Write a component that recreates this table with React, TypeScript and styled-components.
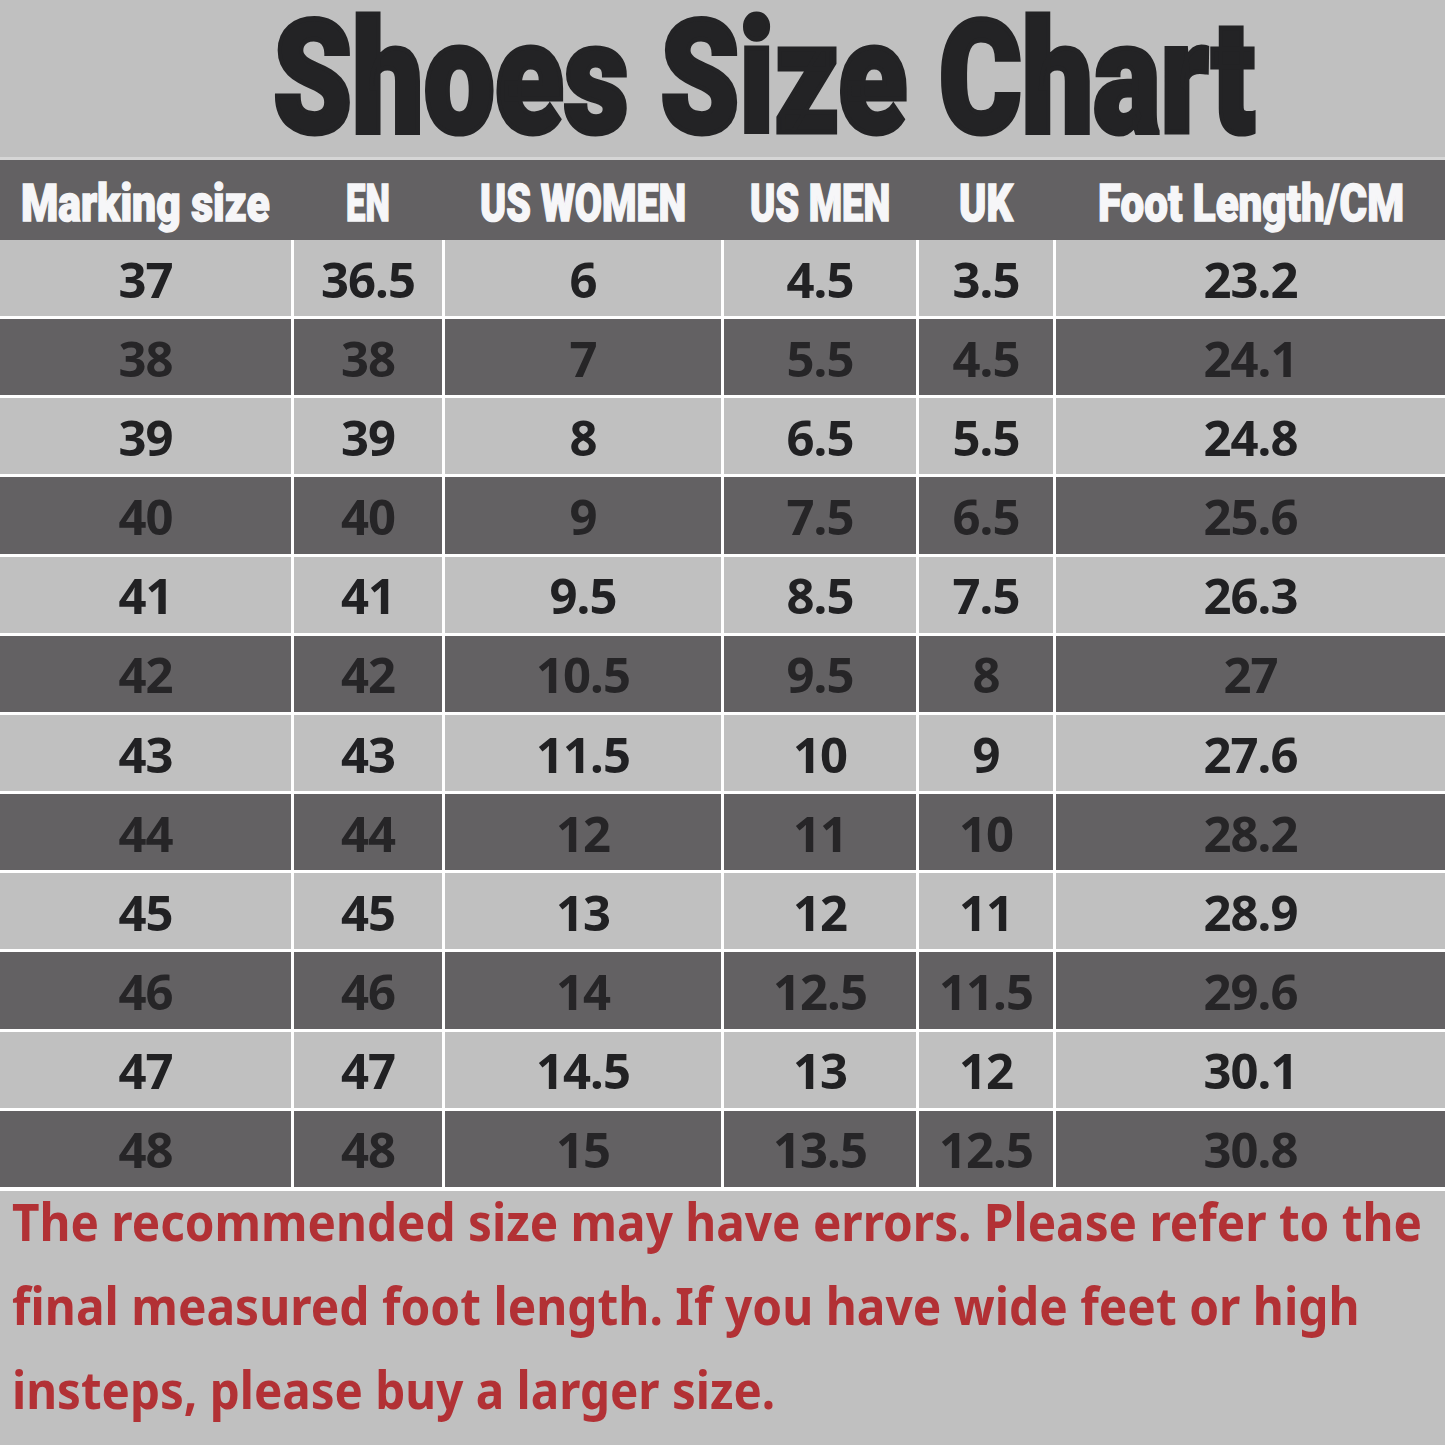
import React, { useLayoutEffect, useRef, useState } from "react";
import styled, { createGlobalStyle } from "styled-components";

const Global = createGlobalStyle`
  html, body { margin: 0; padding: 0; background: #c0c0c0; }
  #root { width: 1445px; }
`;

const Page = styled.div`
  width: 1445px;
  height: 1445px;
  background: #c0c0c0;
  display: flex;
  flex-direction: column;
  overflow: hidden;
`;

const TitleBar = styled.div`
  height: 157px;
  padding-left: 273px;
  border-bottom: 3px solid #d6d6d6;
  display: flex;
  align-items: flex-start;
`;

const TitleText = styled.h1`
  margin: 0;
  font-family: Roboto, Lato, "Liberation Sans", sans-serif;
  font-weight: 900;
  font-size: 158px;
  line-height: 157px;
  color: #232325;
  -webkit-text-stroke: 5px #232325;
`;

const cols = "291px 148px 276px 192px 134px 1fr";

const HeaderRow = styled.div`
  display: grid;
  grid-template-columns: ${cols};
  column-gap: 3px;
  height: 80px;
  background: #636163;
`;

const HeaderCell = styled.div`
  display: flex;
  justify-content: center;
  align-items: center;
  padding-top: 8px;
  font-family: Roboto, Lato, "Liberation Sans", sans-serif;
  font-weight: 900;
  font-size: 52px;
  line-height: 60px;
  color: #f6f6f8;
  -webkit-text-stroke: 1.5px #f6f6f8;
  white-space: nowrap;
`;

const Body = styled.div`
  display: grid;
  grid-template-columns: ${cols};
  grid-auto-rows: 76.17px;
  gap: 3px;
  background: #ffffff;
  padding-bottom: 4px;
`;

const Cell = styled.div<{ $dark: boolean }>`
  display: flex;
  justify-content: center;
  align-items: center;
  background: ${(p) => (p.$dark ? "#636163" : "#c0c0c0")};
  color: ${(p) => (p.$dark ? "#262527" : "#212123")};
  font-family: "Noto Sans", "Open Sans", sans-serif;
  font-weight: 700;
  font-size: 49px;
  letter-spacing: -1px;
  line-height: 1;
  padding-top: 2px;
`;

const Note = styled.div`
  padding-left: 12px;
  display: flex;
  flex-direction: column;
`;

const NoteLine = styled.div`
  font-family: "Noto Sans", "Open Sans", sans-serif;
  font-weight: 700;
  font-size: 52px;
  line-height: 60px;
  margin-bottom: 24px;
  color: #b23135;
  white-space: nowrap;
`;

const FitBox = styled.span<{ $w: number }>`
  display: inline-block;
  width: ${(p) => p.$w}px;
  white-space: nowrap;
`;

const FitInner = styled.span`
  display: inline-block;
  white-space: nowrap;
  transform-origin: left center;
`;

function Fit({ width, children }: { width: number; children: React.ReactNode }) {
  const ref = useRef<HTMLSpanElement>(null);
  const [scale, setScale] = useState(1);
  useLayoutEffect(() => {
    const el = ref.current;
    if (!el) return;
    const measure = () => {
      const w = el.offsetWidth;
      if (w) setScale(width / w);
    };
    measure();
    if (document.fonts && document.fonts.ready) {
      document.fonts.ready.then(measure);
    }
  }, [width]);
  return (
    <FitBox $w={width}>
      <FitInner ref={ref} style={{ transform: `scaleX(${scale})` }}>
        {children}
      </FitInner>
    </FitBox>
  );
}

const headers: [string, number][] = [
  ["Marking size", 249],
  ["EN", 44],
  ["US WOMEN", 206],
  ["US MEN", 140],
  ["UK", 54],
  ["Foot Length/CM", 306],
];

const rows: string[][] = [
  ["37", "36.5", "6", "4.5", "3.5", "23.2"],
  ["38", "38", "7", "5.5", "4.5", "24.1"],
  ["39", "39", "8", "6.5", "5.5", "24.8"],
  ["40", "40", "9", "7.5", "6.5", "25.6"],
  ["41", "41", "9.5", "8.5", "7.5", "26.3"],
  ["42", "42", "10.5", "9.5", "8", "27"],
  ["43", "43", "11.5", "10", "9", "27.6"],
  ["44", "44", "12", "11", "10", "28.2"],
  ["45", "45", "13", "12", "11", "28.9"],
  ["46", "46", "14", "12.5", "11.5", "29.6"],
  ["47", "47", "14.5", "13", "12", "30.1"],
  ["48", "48", "15", "13.5", "12.5", "30.8"],
];

const noteLines: [string, number][] = [
  ["The recommended size may have errors. Please refer to the", 1410],
  ["final measured foot length. If you have wide feet or high", 1348],
  ["insteps, please buy a larger size.", 763],
];

export default function App() {
  return (
    <>
      <Global />
      <Page>
        <TitleBar>
          <TitleText>
            <Fit width={982}>Shoes Size Chart</Fit>
          </TitleText>
        </TitleBar>
        <HeaderRow>
          {headers.map(([h, w]) => (
            <HeaderCell key={h}>
              <Fit width={w}>{h}</Fit>
            </HeaderCell>
          ))}
        </HeaderRow>
        <Body>
          {rows.map((r, i) =>
            r.map((v, j) => (
              <Cell key={`${i}-${j}`} $dark={i % 2 === 1}>
                {v}
              </Cell>
            ))
          )}
        </Body>
        <Note>
          {noteLines.map(([t, w]) => (
            <NoteLine key={t}>
              <Fit width={w}>{t}</Fit>
            </NoteLine>
          ))}
        </Note>
      </Page>
    </>
  );
}
